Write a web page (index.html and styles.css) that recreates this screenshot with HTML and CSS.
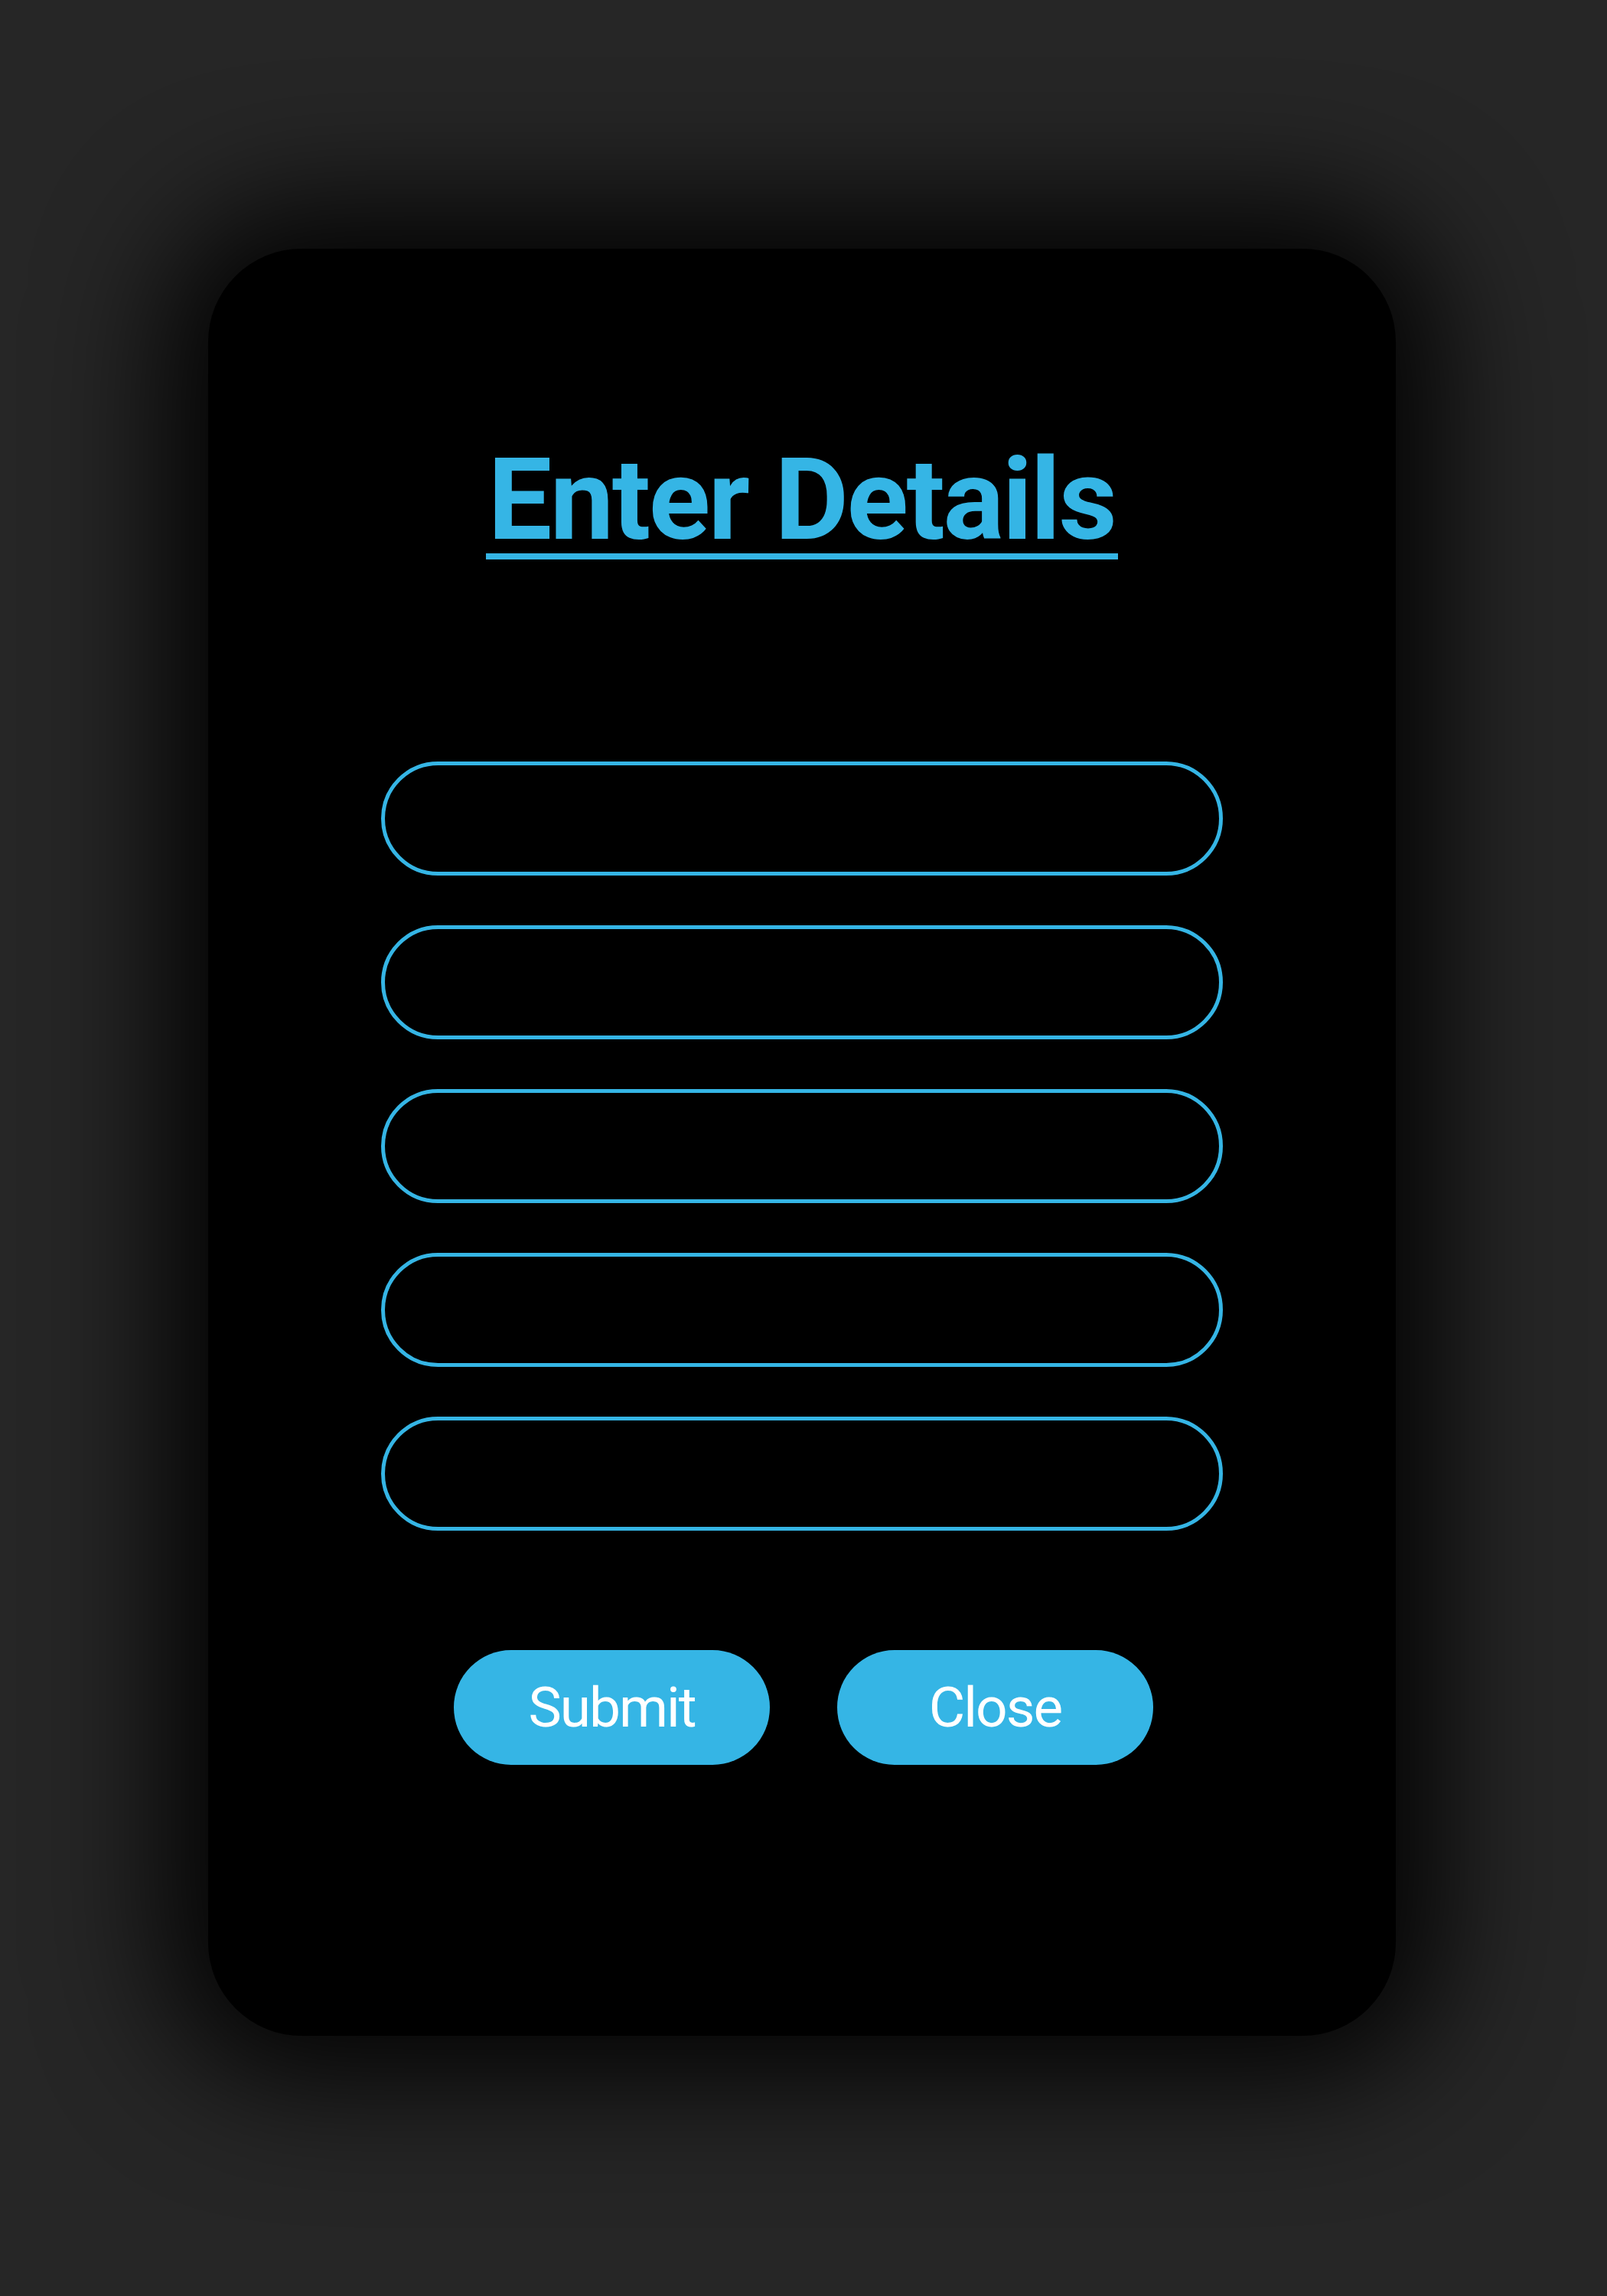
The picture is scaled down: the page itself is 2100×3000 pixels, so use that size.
FILE: index.html
```html
<!DOCTYPE html>
<html lang="en">
<head>
<meta charset="utf-8">
<title>Enter Details</title>
<link rel="stylesheet" href="styles.css">
</head>
<body>
<main class="page">
  <form class="card">
    <h1 class="title"><span class="title-text">Enter Details</span></h1>
    <div class="fields">
      <input class="field" type="text" aria-label="Field 1">
      <input class="field" type="text" aria-label="Field 2">
      <input class="field" type="text" aria-label="Field 3">
      <input class="field" type="text" aria-label="Field 4">
      <input class="field" type="text" aria-label="Field 5">
    </div>
    <div class="actions">
      <button class="btn" type="submit">Submit</button>
      <button class="btn" type="button">Close</button>
    </div>
  </form>
</main>
</body>
</html>
```

FILE: styles.css
```css
html, body {
  margin: 0;
  padding: 0;
}

body {
  background: #262626;
  width: 2100px;
  height: 3000px;
  overflow: hidden;
  font-family: Roboto, "Open Sans", sans-serif;
}

.page {
  display: flex;
  justify-content: center;
  padding-top: 325px;
  padding-right: 4px;
}

.card {
  box-sizing: border-box;
  width: 1552px;
  background: #000;
  border-radius: 122px;
  box-shadow: 0 0 160px 60px rgba(0, 0, 0, 0.9);
  padding: 258px 0 354px;
  display: flex;
  flex-direction: column;
  align-items: center;
}

.title {
  margin: 0;
  font-weight: 700;
  font-size: 149px;
  line-height: 140px;
  color: #35b5e5;
  display: flex;
  justify-content: center;
}

.title-text {
  display: inline-block;
  letter-spacing: -2.5px;
  border-bottom: 8px solid #35b5e5;
  padding: 0 3px 0 2px;
}

.fields {
  margin-top: 264px;
  display: flex;
  flex-direction: column;
  gap: 65px;
}

.field {
  display: block;
  box-sizing: border-box;
  width: 1100px;
  height: 149px;
  margin: 0;
  padding: 0 60px;
  background: transparent;
  border: 5px solid #35b5e5;
  border-radius: 75px;
  outline: none;
  color: #fff;
  font-family: Roboto, sans-serif;
  font-size: 60px;
}

.actions {
  margin-top: 156px;
  display: flex;
  gap: 88px;
  padding-left: 4px;
}

.btn {
  box-sizing: border-box;
  width: 413px;
  height: 150px;
  margin: 0;
  padding: 0;
  border: none;
  border-radius: 75px;
  background: #35b5e5;
  color: #fff;
  font-family: Roboto, sans-serif;
  font-weight: 400;
  font-size: 73px;
  letter-spacing: -2px;
  display: flex;
  align-items: center;
  justify-content: center;
  cursor: pointer;
}
```
